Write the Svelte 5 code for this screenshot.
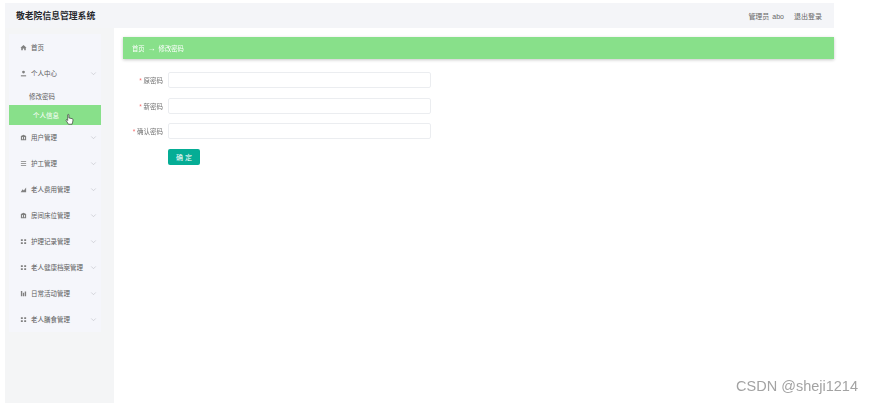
<script>
  const menu = [
    { label: "用户管理", icon: "bank" },
    { label: "护工管理", icon: "lines" },
    { label: "老人费用管理", icon: "chart" },
    { label: "房间床位管理", icon: "bank" },
    { label: "护理记录管理", icon: "grid" },
    { label: "老人健康档案管理", icon: "grid" },
    { label: "日常活动管理", icon: "bars" },
    { label: "老人膳食管理", icon: "grid" }
  ];
  const fields = ["原密码", "新密码", "确认密码"];
</script>

{#snippet icon(name)}
  <svg class="icon" viewBox="0 0 8 8" aria-hidden="true">
    {#if name === "home"}
      <path d="M4 1 L7.5 4.2 H6.6 V7 H4.8 V5 H3.2 V7 H1.4 V4.2 H.5 Z" />
    {:else if name === "user"}
      <circle cx="4" cy="2.4" r="1.6" />
      <path d="M1 6 H7 V7.3 H1 Z" />
    {:else if name === "bank"}
      <path d="M4 .8 L7 2.4 V7.2 H1 V2.4 Z M2.4 3.4 V6 H3.4 V3.4 Z M4.6 3.4 V6 H5.6 V3.4 Z" fill-rule="evenodd" />
    {:else if name === "lines"}
      <path d="M1 1.4 H7 V2.3 H1 Z M1 3.6 H7 V4.5 H1 Z M1 5.8 H7 V6.7 H1 Z" />
    {:else if name === "chart"}
      <path d="M.8 7 L3 3.8 L4.4 5 L7 1.6 V7 Z" />
    {:else if name === "grid"}
      <path d="M1 1.4 H3.2 V3.4 H1 Z M4.8 1.4 H7 V3.4 H4.8 Z M1 4.8 H3.2 V6.8 H1 Z M4.8 4.8 H7 V6.8 H4.8 Z" />
    {:else}
      <path d="M1 1.2 H2.6 V7 H1 Z M3.3 3 H4.7 V7 H3.3 Z M5.4 1.8 H7 V7 H5.4 Z" />
    {/if}
  </svg>
{/snippet}

{#snippet chevron()}
  <svg class="chevron" viewBox="0 0 8 8" aria-hidden="true">
    <path d="M1.4 2.8 L4 5.4 L6.6 2.8" />
  </svg>
{/snippet}

<div class="page">
  <div class="shell">
    <header class="topbar">
      <strong class="brand">敬老院信息管理系统</strong>
      <div class="account">
        <span class="who">管理员 abo</span>
        <span>退出登录</span>
      </div>
    </header>

    <div class="body">
      <aside class="sidebar">
        <nav class="menu">
          <div class="row">
            {@render icon("home")}
            <span>首页</span>
          </div>
          <div class="row">
            {@render icon("user")}
            <span>个人中心</span>
            {@render chevron()}
          </div>
          <div class="sub">修改密码</div>
          <div class="sub active">
            个人信息
            <svg class="hand" viewBox="0 0 12 15" aria-hidden="true">
              <path d="M3.6 1.4 C3.6 .4 5.2 .4 5.2 1.4 V5.4 L9.6 6.4 C10.6 6.7 10.8 7.4 10.7 8.2 L10.2 11 L9.4 13.8 H4.6 L1.6 9 C1 8 2.2 7.2 3 8 L3.6 8.8 Z" />
            </svg>
          </div>
          {#each menu as item}
            <div class="row">
              {@render icon(item.icon)}
              <span>{item.label}</span>
              {@render chevron()}
            </div>
          {/each}
        </nav>
      </aside>

      <main class="content">
        <div class="crumbs">
          <span>首页</span>
          <span class="arrow">→</span>
          <span>修改密码</span>
        </div>

        <form class="form">
          {#each fields as field}
            <div class="field">
              <label for={field}><em>*</em> {field}</label>
              <input id={field} type="password" />
            </div>
          {/each}
          <button type="button">确 定</button>
        </form>
      </main>
    </div>
  </div>

  <div class="watermark">CSDN @sheji1214</div>
</div>

<style>
  :global(body) {
    background: #fff;
    overflow: hidden;
  }

  .page {
    font-family: "Liberation Sans", "Noto Sans CJK SC", sans-serif;
    height: 403px;
    overflow: hidden;
    position: relative;
    width: 873px;
  }

  .shell {
    display: flex;
    filter: blur(0.6px);
    flex-direction: column;
    height: 400px;
    margin-left: 5px;
    padding-top: 3px;
    width: 829px;
  }

  .topbar {
    align-items: center;
    background: #f4f5f8;
    box-sizing: border-box;
    display: flex;
    flex: 0 0 25px;
    justify-content: space-between;
    padding: 0 12px 0 11px;
  }

  .brand {
    color: #26282c;
    font-size: 8.8px;
  }

  .account {
    color: #666;
    display: flex;
    font-size: 7px;
    gap: 10px;
  }

  .who {
    word-spacing: 1px;
  }

  .body {
    display: flex;
    flex: 1;
  }

  .sidebar {
    background: #f4f5f6;
    box-sizing: border-box;
    flex: 0 0 109px;
    min-width: 0;
    padding: 6px 13px 0 4px;
  }

  .menu {
    background: #f5f6fb;
    height: 298px;
  }

  .row {
    align-items: center;
    color: #5c5c5c;
    display: flex;
    font-size: 6.5px;
    gap: 4px;
    height: 26px;
    padding: 0 4px 0 11px;
  }

  .row span {
    flex: 1;
    min-width: 0;
    white-space: nowrap;
  }

  .icon {
    fill: #808080;
    flex: none;
    height: 7px;
    width: 7px;
  }

  .chevron {
    fill: none;
    flex: none;
    height: 7px;
    stroke: #c4c6cc;
    stroke-width: 0.8;
    width: 7px;
  }

  .sub {
    align-items: center;
    color: #5c5c5c;
    display: flex;
    font-size: 6.5px;
    height: 19px;
    padding-left: 20px;
  }

  .sub.active {
    background: #88e08a;
    color: #fff;
    height: 20px;
    margin-bottom: -1px;
    padding-left: 24px;
    position: relative;
  }

  .hand {
    fill: #fff;
    height: 13px;
    left: 56px;
    position: absolute;
    stroke: #333;
    stroke-width: 0.9;
    top: 8px;
    width: 9px;
  }

  .content {
    flex: 1;
    min-width: 0;
    padding: 9px 0 0 9px;
  }

  .crumbs {
    align-items: center;
    background: #88e08a;
    box-shadow: 0 1px 3px rgba(0, 0, 0, 0.22);
    color: #fff;
    display: flex;
    font-size: 6.3px;
    gap: 3px;
    height: 22px;
    padding-left: 9px;
  }

  .arrow {
    color: #fff;
    font-size: 8px;
  }

  .form {
    display: flex;
    flex-direction: column;
    gap: 9.5px;
    margin-top: 13px;
  }

  .field {
    align-items: center;
    display: flex;
    gap: 5px;
  }

  .field label {
    color: #707070;
    font-size: 6.5px;
    text-align: right;
    width: 40px;
  }

  .field em {
    color: #f56c6c;
    font-style: normal;
  }

  .field input {
    background: #fff;
    border: 1px solid #ebedf0;
    border-radius: 2px;
    box-sizing: border-box;
    height: 16px;
    margin: 0;
    padding: 0;
    width: 263px;
  }

  button {
    align-self: flex-start;
    background: #05ad95;
    border: 0;
    border-radius: 2px;
    color: #fff;
    font-family: inherit;
    font-size: 7px;
    height: 16px;
    margin-left: 45px;
    padding: 0;
    width: 32px;
  }

  .watermark {
    bottom: 9px;
    color: #a3a3a3;
    font-size: 14.5px;
    position: absolute;
    right: 15px;
  }
</style>
